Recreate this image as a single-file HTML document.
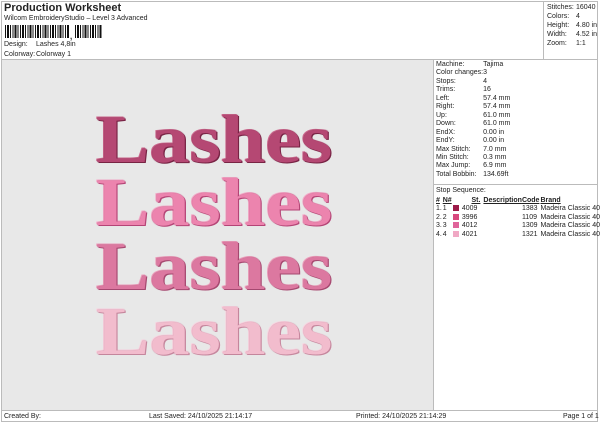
<!DOCTYPE html>
<html><head><style>
*{margin:0;padding:0;box-sizing:border-box}
body{width:600px;height:424px;background:#fff;font-family:"Liberation Sans",sans-serif;color:#222;position:relative;overflow:hidden}
.a{position:absolute;white-space:nowrap}
.s{font-size:7px}
.bc{position:absolute;top:25px;height:13px;background:repeating-linear-gradient(90deg,#111 0 1px,#fff 1px 2px,#111 2px 4px,#fff 4px 5px,#111 5px 6px,#fff 6px 7.5px)}
.L{position:absolute;left:96px;font-family:"Liberation Serif",serif;font-weight:bold;font-size:68px;line-height:1;transform:scaleX(1.18);transform-origin:0 0}
table{border-collapse:collapse}
td{font-size:7px;padding:0;height:8.45px;line-height:8.45px;white-space:nowrap}
</style></head><body>
<div style="position:absolute;left:1px;top:1px;width:597px;height:421px;border:1px solid #bbb"></div>
<div class="a" style="left:4px;top:2px;font-size:11px;font-weight:bold">Production Worksheet</div>
<div class="a s" style="left:4px;top:15px">Wilcom EmbroideryStudio – Level 3 Advanced</div>
<div class="bc" style="left:5px;width:65px"></div>
<div class="bc" style="left:75px;width:27px"></div>
<div class="a" style="left:70px;top:32px;font-size:8px;font-weight:bold">,</div>
<div class="a s" style="left:4px;top:41px">Design:</div><div class="a s" style="left:36px;top:41px">Lashes 4,8in</div>
<div class="a s" style="left:4px;top:51px">Colorway:</div><div class="a s" style="left:36px;top:51px">Colorway 1</div>
<div style="position:absolute;left:2px;top:59px;width:431px;height:351px;background:#e8e8e8;border-top:1px solid #bbb"></div>
<div style="position:absolute;left:433px;top:59px;width:1px;height:351px;background:#bbb"></div>
<div style="position:absolute;left:543px;top:1px;width:1px;height:58px;background:#bbb"></div>
<div style="position:absolute;left:433px;top:59px;width:165px;height:1px;background:#bbb"></div>
<div style="position:absolute;left:433px;top:184px;width:165px;height:1px;background:#bbb"></div>
<div style="position:absolute;left:2px;top:410px;width:596px;height:1px;background:#bbb"></div>
<div class="L" style="top:105px;color:#b54873;text-shadow:0 0 1px #6d1c3c,1px 1px 0 #7a2647,-1px -1px 0 #d06c92">Lashes</div>
<div class="L" style="top:168px;color:#ec84ae;text-shadow:0 0 1px #a33a66,1px 1px 0 #b8487a,-1px -1px 0 #f7b0cd">Lashes</div>
<div class="L" style="top:232px;color:#dc78a0;text-shadow:0 0 1px #983e63,1px 1px 0 #a84c73,-1px -1px 0 #f0a4c0">Lashes</div>
<div class="L" style="top:297px;color:#f2bccd;text-shadow:0 0 1px #b87890,1px 1px 0 #c88aa0,-1px -1px 0 #fad6e2">Lashes</div>
<div style="position:absolute;left:547px;top:4px"><table>
<tr><td style="width:29px;height:9px">Stitches:</td><td>16040</td></tr>
<tr><td style="height:9px">Colors:</td><td>4</td></tr>
<tr><td style="height:9px">Height:</td><td>4.80 in</td></tr>
<tr><td style="height:9px">Width:</td><td>4.52 in</td></tr>
<tr><td style="height:9px">Zoom:</td><td>1:1</td></tr></table></div>
<div style="position:absolute;left:436px;top:61px"><table>
<tr><td style="width:47px">Machine:</td><td>Tajima</td></tr>
<tr><td>Color changes:</td><td>3</td></tr>
<tr><td>Stops:</td><td>4</td></tr>
<tr><td>Trims:</td><td>16</td></tr>
<tr><td>Left:</td><td>57.4 mm</td></tr>
<tr><td>Right:</td><td>57.4 mm</td></tr>
<tr><td>Up:</td><td>61.0 mm</td></tr>
<tr><td>Down:</td><td>61.0 mm</td></tr>
<tr><td>EndX:</td><td>0.00 in</td></tr>
<tr><td>EndY:</td><td>0.00 in</td></tr>
<tr><td>Max Stitch:</td><td>7.0 mm</td></tr>
<tr><td>Min Stitch:</td><td>0.3 mm</td></tr>
<tr><td>Max Jump:</td><td>6.9 mm</td></tr>
<tr><td>Total Bobbin:</td><td>134.69ft</td></tr></table></div>
<div class="a s" style="left:436px;top:187px">Stop Sequence:</div>
<div style="position:absolute;left:436px;top:197px"><table>
<tr><td style="width:8px;font-weight:bold;text-decoration:underline">#</td><td style="width:12px;font-weight:bold;text-decoration:underline">N#</td><td style="width:32px;text-align:right;font-weight:bold;text-decoration:underline">St.</td><td style="width:40px;padding-left:3px;font-weight:bold;text-decoration:underline">Description</td><td style="width:20px;font-weight:bold;text-decoration:underline">Code</td><td style="font-weight:bold;text-decoration:underline">Brand</td></tr>
<tr><td>1.</td><td>1</td><td><span style="display:inline-block;width:6px;height:6px;background:#9c1a48;margin-right:3px;vertical-align:-1px"></span>4009</td><td></td><td>1383</td><td>Madeira Classic 40</td></tr>
<tr><td>2.</td><td>2</td><td><span style="display:inline-block;width:6px;height:6px;background:#d8487e;margin-right:3px;vertical-align:-1px"></span>3996</td><td></td><td>1109</td><td>Madeira Classic 40</td></tr>
<tr><td>3.</td><td>3</td><td><span style="display:inline-block;width:6px;height:6px;background:#e0649a;margin-right:3px;vertical-align:-1px"></span>4012</td><td></td><td>1309</td><td>Madeira Classic 40</td></tr>
<tr><td>4.</td><td>4</td><td><span style="display:inline-block;width:6px;height:6px;background:#f0a8c4;margin-right:3px;vertical-align:-1px"></span>4021</td><td></td><td>1321</td><td>Madeira Classic 40</td></tr>
</table></div>
<div class="a s" style="left:4px;top:413px">Created By:</div>
<div class="a s" style="left:149px;top:413px">Last Saved: 24/10/2025 21:14:17</div>
<div class="a s" style="left:356px;top:413px">Printed: 24/10/2025 21:14:29</div>
<div class="a s" style="left:563px;top:413px">Page 1 of 1</div>
</body></html>
